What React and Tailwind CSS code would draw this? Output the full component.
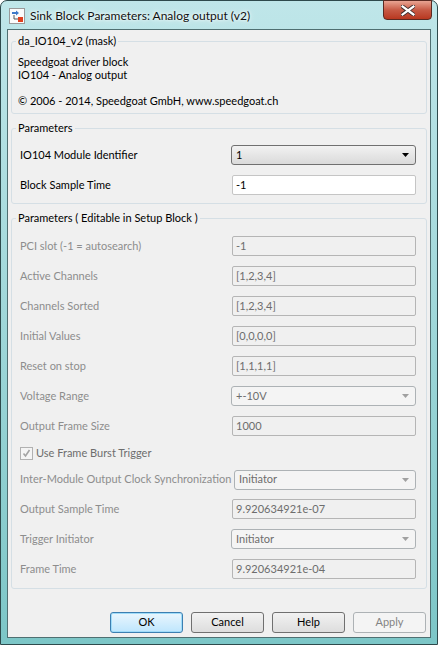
import React from 'react';

const ROWS = [
  { label: 'PCI slot (-1 = autosearch)', value: '-1', h: 'h-[30px]' },
  { label: 'Active Channels', value: '[1,2,3,4]', h: 'h-[30px]' },
  { label: 'Channels Sorted', value: '[1,2,3,4]', h: 'h-[30px]' },
  { label: 'Initial Values', value: '[0,0,0,0]', h: 'h-[30px]' },
  { label: 'Reset on stop', value: '[1,1,1,1]', h: 'h-[30px]' },
  { label: 'Voltage Range', value: '+-10V', combo: true, h: 'h-[30px]' },
  { label: 'Output Frame Size', value: '1000', h: 'h-[30px]' },
  { check: 'Use Frame Burst Trigger', h: 'h-[24px]' },
  { label: 'Inter-Module Output Clock Synchronization', value: 'Initiator', combo: true, narrow: true, h: 'h-[29px]' },
  { label: 'Output Sample Time', value: '9.920634921e-07', h: 'h-[30px]' },
  { label: 'Trigger Initiator', value: 'Initiator', combo: true, h: 'h-[30px]' },
  { label: 'Frame Time', value: '9.920634921e-04', h: 'h-[30px]' },
];

function Arrow({ color }) {
  return (
    <svg width="7" height="4" viewBox="0 0 7 4" className="shrink-0">
      <path d="M0 0h7L3.5 4z" fill={color} />
    </svg>
  );
}

function Input({ value, disabled }) {
  return (
    <div className={`w-[184px] h-[20px] flex items-center px-[3px] border rounded-[2px] ${disabled ? 'bg-[#f0f0f0] border-[#b5b5b5] text-[#6d6d6d]' : 'bg-white border-[#c5c5c5] text-black'}`}>
      {value}
    </div>
  );
}

function Combo({ value, disabled, narrow }) {
  return (
    <div className={`${narrow ? 'w-[182px]' : 'w-[185px]'} h-[20px] flex items-center justify-between pl-[4px] pr-[6px] border rounded-[3px] ${disabled ? 'bg-[#f4f4f4] border-[#adb2b5] text-[#6d6d6d]' : 'bg-gradient-to-b from-[#f2f2f2] to-[#dadada] border-[#707070] text-black'}`}>
      <span>{value}</span>
      <Arrow color={disabled ? '#a0a0a0' : '#000'} />
    </div>
  );
}

function Group({ title, className, children }) {
  return (
    <fieldset className={`border border-[#d5dfe5] rounded-[3px] ${className}`}>
      <legend className="ml-[4px] px-[2px] leading-[14px]">{title}</legend>
      {children}
    </fieldset>
  );
}

function Button({ children, variant }) {
  const cls = {
    ok: 'border-[#3c7fb1] bg-gradient-to-b from-[#eaf6fd] to-[#bee6fd] text-black shadow-[inset_0_0_0_1px_#9fdcf9]',
    normal: 'border-[#707070] bg-gradient-to-b from-[#f2f2f2] to-[#dddddd] text-black',
    disabled: 'border-[#adb2b5] bg-[#f4f4f4] text-[#838383]',
  }[variant];
  return (
    <div className={`w-[73px] h-[21px] border rounded-[3px] flex items-center justify-center ${cls}`}>
      {children}
    </div>
  );
}

export default function App() {
  return (
    <div className="w-[438px] h-[645px] relative font-['Lato',sans-serif] text-[11px] text-black">
      <div className="absolute inset-0 rounded-t-[7px] border border-[#2e4a4c] bg-gradient-to-b from-[#bfe6e9] via-[#9fd7d9] to-[#7cc6c7] flex flex-col">
        {/* Title bar */}
        <div className="h-[28px] flex items-center relative">
          <svg width="16" height="16" viewBox="0 0 16 16" className="ml-[8px] mt-[2px]">
            <rect x="0.5" y="0.5" width="15" height="15" fill="#fbfbfb" stroke="#9a9a9a" />
            <path d="M3 4h4V2.5L10 5 7 7.5V6H3z" fill="#3d78c8" />
            <rect x="9" y="9" width="5" height="5" fill="#e0401e" />
            <path d="M5 7v4h4" stroke="#555" fill="none" />
          </svg>
          <span className="ml-[5px] mt-[2px] text-[12px] text-[#111] [text-shadow:0_0_6px_#ffffff,0_0_3px_#ffffff]">
            Sink Block Parameters: Analog output (v2)
          </span>
          <div className="absolute right-[5px] top-[-1px] w-[49px] h-[20px] rounded-b-[4px] border border-[#5a2a22] bg-gradient-to-b from-[#e8a493] via-[#c75a45] to-[#b8371f] flex items-center justify-center">
            <svg width="14" height="11" viewBox="0 0 14 11">
              <path d="M1.5 1.5L12.5 9.5M12.5 1.5L1.5 9.5" stroke="#3b2b2b" strokeWidth="4" strokeLinecap="square" />
              <path d="M1.5 1.5L12.5 9.5M12.5 1.5L1.5 9.5" stroke="#ffffff" strokeWidth="2.2" strokeLinecap="square" />
            </svg>
          </div>
        </div>

        {/* Client area */}
        <div className="ml-[6px] mr-[6px] h-[609px] border border-[#4f6f71] bg-[#f0f0f0] flex flex-col px-[3px] pt-[4px]">
          <Group title="da_IO104_v2 (mask)" className="h-[80px]">
            <div className="pl-[6px] pt-[7px] leading-[13px]">
              <div>Speedgoat driver block</div>
              <div>IO104 - Analog output</div>
              <div className="h-[13px]" />
              <div>© 2006 - 2014, Speedgoat GmbH, www.speedgoat.ch</div>
            </div>
          </Group>

          <Group title="Parameters" className="mt-[7px] h-[83px]">
            <div className="pt-[5px] pl-[8px] pr-[10px]">
              <div className="h-[30px] flex items-center justify-between">
                <span>IO104 Module Identifier</span>
                <Combo value="1" />
              </div>
              <div className="h-[30px] flex items-center justify-between">
                <span>Block Sample Time</span>
                <Input value="-1" />
              </div>
            </div>
          </Group>

          <Group title="Parameters ( Editable in Setup Block )" className="mt-[7px] h-[378px]">
            <div className="pt-[6px] pl-[8px] pr-[10px]">
              {ROWS.map((r, i) =>
                r.check ? (
                  <div key={i} className={`${r.h} flex items-center`}>
                    <div className="w-[13px] h-[13px] border border-[#b1b1b1] bg-[#f4f4f4] flex items-center justify-center">
                      <svg width="9" height="9" viewBox="0 0 9 9">
                        <path d="M1.5 4.5L3.5 7L7.5 1" stroke="#a3a3a3" strokeWidth="1.6" fill="none" />
                      </svg>
                    </div>
                    <span className="ml-[3px] text-[#6d6d6d]">{r.check}</span>
                  </div>
                ) : (
                  <div key={i} className={`${r.h} flex items-center justify-between`}>
                    <span className="text-[#8d8d8d] whitespace-nowrap">{r.label}</span>
                    {r.combo ? <Combo value={r.value} disabled narrow={r.narrow} /> : <Input value={r.value} disabled />}
                  </div>
                )
              )}
            </div>
          </Group>

          <div className="flex-1 flex items-end justify-end gap-[8px] pr-[1px] pb-[4px]">
            <Button variant="ok">OK</Button>
            <Button variant="normal">Cancel</Button>
            <Button variant="normal">Help</Button>
            <Button variant="disabled">Apply</Button>
          </div>
        </div>
      </div>
    </div>
  );
}
